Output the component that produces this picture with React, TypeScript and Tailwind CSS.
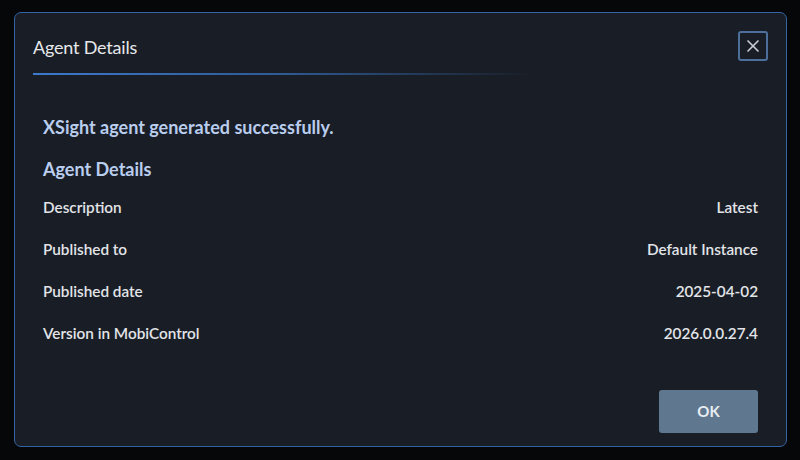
import { X } from "lucide-react";

const rows = [
  { label: "Description", value: "Latest" },
  { label: "Published to", value: "Default Instance" },
  { label: "Published date", value: "2025-04-02" },
  { label: "Version in MobiControl", value: "2026.0.0.27.4" },
];

export default function App() {
  return (
    <div
      className="w-[800px] h-[460px] bg-[#060709] pt-[12px] pl-[14px] overflow-hidden"
      style={{ fontFamily: "Lato, 'Noto Sans', sans-serif" }}
    >
      <div className="w-[773px] h-[435px] rounded-[7px] border border-[#3463a6] bg-[#191e26] flex flex-col">
        {/* header */}
        <div className="px-[18px] pt-[18px]">
          <div className="h-[30px] flex items-center justify-between">
            <h2 className="mt-[3px] text-[18px] text-[#e6e8eb] tracking-[-0.2px]">Agent Details</h2>
            <button className="w-[30px] h-[30px] rounded-[3px] border-2 border-[#4d6f9c] flex items-center justify-center text-[#c8ccd2]">
              <X size={20} strokeWidth={2} />
            </button>
          </div>
          <div className="mt-[12px] h-[2px] w-[500px] bg-gradient-to-r from-[#3d79cc] via-[#2f5a94] to-transparent" />
        </div>

        {/* body */}
        <div className="px-[28px] pt-[40px] flex-1 flex flex-col">
          <p className="h-[24px] leading-[24px] text-[18px] font-bold text-[#b9cdee]">
            XSight agent generated successfully.
          </p>
          <h3 className="mt-[18px] h-[24px] leading-[24px] text-[18px] font-bold text-[#b9cdee]">
            Agent Details
          </h3>
          <div className="mt-[5px]">
            {rows.map((r) => (
              <div
                key={r.label}
                className="h-[42px] flex items-center justify-between text-[15.3px] font-semibold text-[#e2e4e8]"
              >
                <span>{r.label}</span>
                <span>{r.value}</span>
              </div>
            ))}
          </div>
          <div className="flex-1 flex items-end justify-end pb-[13px]">
            <button className="w-[99px] h-[43px] rounded-[3px] bg-[#5f7890] text-[15px] font-bold text-[#e8edf2]">
              OK
            </button>
          </div>
        </div>
      </div>
    </div>
  );
}
